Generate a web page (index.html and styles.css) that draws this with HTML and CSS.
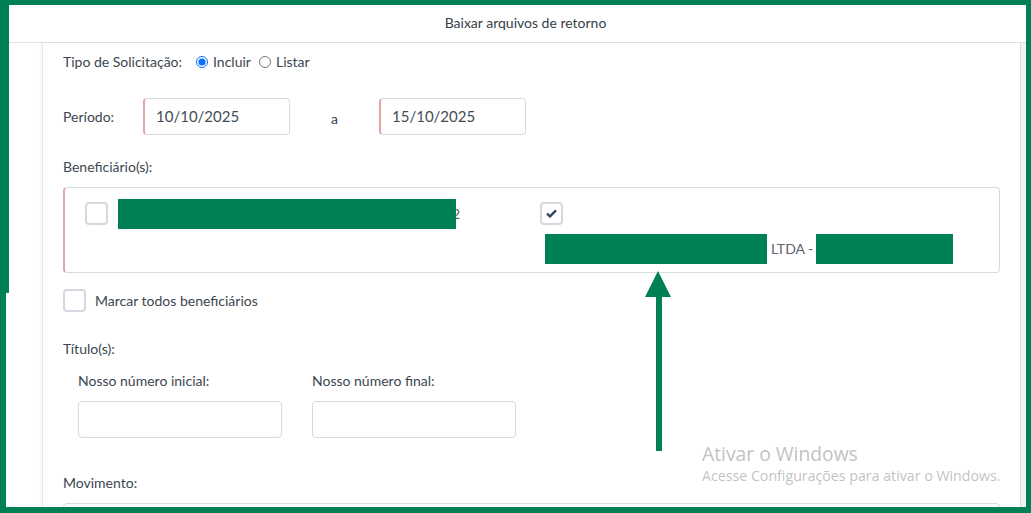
FILE: index.html
```html
<!DOCTYPE html>
<html lang="pt-BR">
<head>
    <meta charset="UTF-8">
    <title>Baixar arquivos de retorno</title>
    <link rel="stylesheet" href="styles.css">
</head>
<body>
<div class="frame">
    <div class="modal-title">Baixar arquivos de retorno</div>
    <div class="modal-body">
        <div class="panel">
            <div class="tipo">
                <span>Tipo de Solicitação:</span>
                <label class="radio"><input type="radio" name="tipo" checked>Incluir</label>
                <label class="radio"><input type="radio" name="tipo">Listar</label>
            </div>

            <div class="periodo">
                <span class="periodo-label">Período:</span>
                <div class="field date">10/10/2025</div>
                <span class="sep">a</span>
                <div class="field date">15/10/2025</div>
            </div>

            <div class="label benef-label">Beneficiário(s):</div>
            <div class="benef-box">
                <div class="benef">
                    <span class="check"></span>
                    <span class="redact r1"></span><span class="tail">2</span>
                </div>
                <div class="benef second">
                    <span class="check">
                        <svg width="11" height="9" viewBox="0 0 11 9"><path d="M1 4.6 L4 7.4 L10 1.4" fill="none" stroke="#2f4a60" stroke-width="2.4"/></svg>
                    </span>
                    <div class="benef-name">
                        <span class="redact r2"></span><span class="ltda">LTDA -</span><span class="redact r3"></span>
                    </div>
                </div>
            </div>

            <label class="todos"><span class="check"></span>Marcar todos beneficiários</label>

            <div class="label titulo-label">Título(s):</div>
            <div class="titulos">
                <div class="col">
                    <div class="sub-label">Nosso número inicial:</div>
                    <div class="field small"></div>
                </div>
                <div class="col">
                    <div class="sub-label">Nosso número final:</div>
                    <div class="field small"></div>
                </div>
            </div>

            <div class="label mov-label">Movimento:</div>
            <div class="field wide"></div>
        </div>
        <div class="scroll-track"></div>
    </div>

    <!-- seta de marcação -->
    <svg class="arrow" width="40" height="190" viewBox="0 0 40 190">
        <polygon points="5,29 18,3 31,29" fill="#008055"/>
        <rect x="16" y="27" width="6" height="156" fill="#008055"/>
    </svg>

    <div class="watermark">
        <div class="wm-title">Ativar o Windows</div>
        <div class="wm-sub">Acesse Configurações para ativar o Windows.</div>
    </div>
</div>
</body>
</html>
```

FILE: styles.css
```css
html, body{
    margin: 0;
    padding: 0;
    background: #ffffff;
}
body{
    font-family: "Lato", "Liberation Sans", sans-serif;
    font-size: 14px;
    line-height: 20px;
    color: #3b4650;
}
.frame{
    position: relative;
    width: 1031px;
    height: 513px;
    box-sizing: border-box;
    border-top: 5px solid #008055;
    border-right: 5px solid #008055;
    border-bottom: 6px solid #008055;
    border-left: 6px solid #008055;
    overflow: hidden;
}
.frame::before{
    content: "";
    position: absolute;
    left: 0;
    top: 0;
    width: 3px;
    height: 288px;
    background: #008055;
    z-index: 2;
}
.modal-title{
    height: 37px;
    line-height: 35px;
    border-bottom: 1px solid #e2e2e2;
    text-align: center;
    padding-left: 19px;
    color: #36404a;
}
.modal-body{
    display: flex;
    padding-left: 36px;
    background: #ffffff;
    height: 470px;
}
.panel{
    flex: 1;
    background: #ffffff;
    border-left: 1px solid #e6e6e6;
    border-right: 1px solid #dcdcdc;
    padding: 9px 19px 0 20px;
    box-shadow: -2px 0 3px rgba(0,0,0,0.03);
}
.scroll-track{
    width: 5px;
    background: #f3f3f3;
}
.tipo{
    display: flex;
    align-items: center;
    height: 20px;
}
.radio{
    display: flex;
    align-items: center;
    margin-left: 4px;
}
.radio input{
    width: 12px;
    height: 12px;
    margin: 0 5px 0 10px;
    accent-color: #0b6efd;
}
.radio + .radio input{
    margin-left: 3px;
}
.radio + .radio{
    padding-left: 1px;
}
.periodo{
    display: flex;
    align-items: center;
    margin-top: 26px;
}
.periodo-label{
    width: 80px;
}
.field{
    box-sizing: border-box;
    height: 37px;
    border: 1px solid #d5dbe1;
    border-radius: 4px;
    background: #ffffff;
}
.date{
    width: 147px;
    border-left: 2px solid #e9a2a6;
    padding-left: 11px;
    line-height: 35px;
    font-size: 15px;
    color: #434c55;
}
.sep{
    width: 89px;
    text-align: center;
    padding-top: 5px;
}
.label{
    height: 20px;
}
.benef-label{
    margin-top: 22px;
}
.benef-box{
    box-sizing: border-box;
    margin-top: 10px;
    width: 937px;
    height: 86px;
    border: 1px solid #d5dbe1;
    border-left: 2px solid #e9a2a6;
    border-radius: 4px;
    display: grid;
    grid-template-columns: 455px 1fr;
    padding: 14px 20px 0 20px;
}
.benef{
    display: flex;
    align-items: center;
    height: 23px;
}
.benef.second{
    display: block;
    height: auto;
}
.check{
    box-sizing: border-box;
    display: inline-flex;
    align-items: center;
    justify-content: center;
    width: 23px;
    height: 23px;
    border: 2px solid #d3d9df;
    border-radius: 4px;
    background: #ffffff;
    flex-shrink: 0;
}
.redact{
    display: inline-block;
    height: 30px;
    background: #008055;
}
.r1{
    width: 338px;
    margin-left: 10px;
    position: relative;
    z-index: 1;
}
.tail{
    margin-left: -4px;
    color: #5a646d;
}
.benef-name{
    display: flex;
    align-items: center;
    margin-top: 9px;
    margin-left: 5px;
}
.r2{
    width: 222px;
}
.r3{
    width: 137px;
}
.ltda{
    margin: 0 3px 0 4px;
    color: #5a646d;
}
.todos{
    display: flex;
    align-items: center;
    margin-top: 16px;
}
.todos .check{
    margin-right: 9px;
}
.titulo-label{
    margin-top: 27px;
}
.titulos{
    display: flex;
    padding-left: 15px;
    margin-top: 12px;
}
.titulos .col{
    width: 234px;
}
.sub-label{
    height: 20px;
}
.small{
    width: 204px;
    margin-top: 10px;
}
.mov-label{
    margin-top: 35px;
}
.wide{
    width: 937px;
    margin-top: 10px;
}
.arrow{
    position: absolute;
    left: 634px;
    top: 263px;
}
.watermark{
    position: absolute;
    left: 696px;
    top: 436px;
    font-family: "Open Sans", "Liberation Sans", sans-serif;
    color: rgba(140,140,140,0.55);
}
.wm-title{
    font-size: 19.3px;
    line-height: 25px;
}
.wm-sub{
    font-size: 14.2px;
    line-height: 20px;
}
```
